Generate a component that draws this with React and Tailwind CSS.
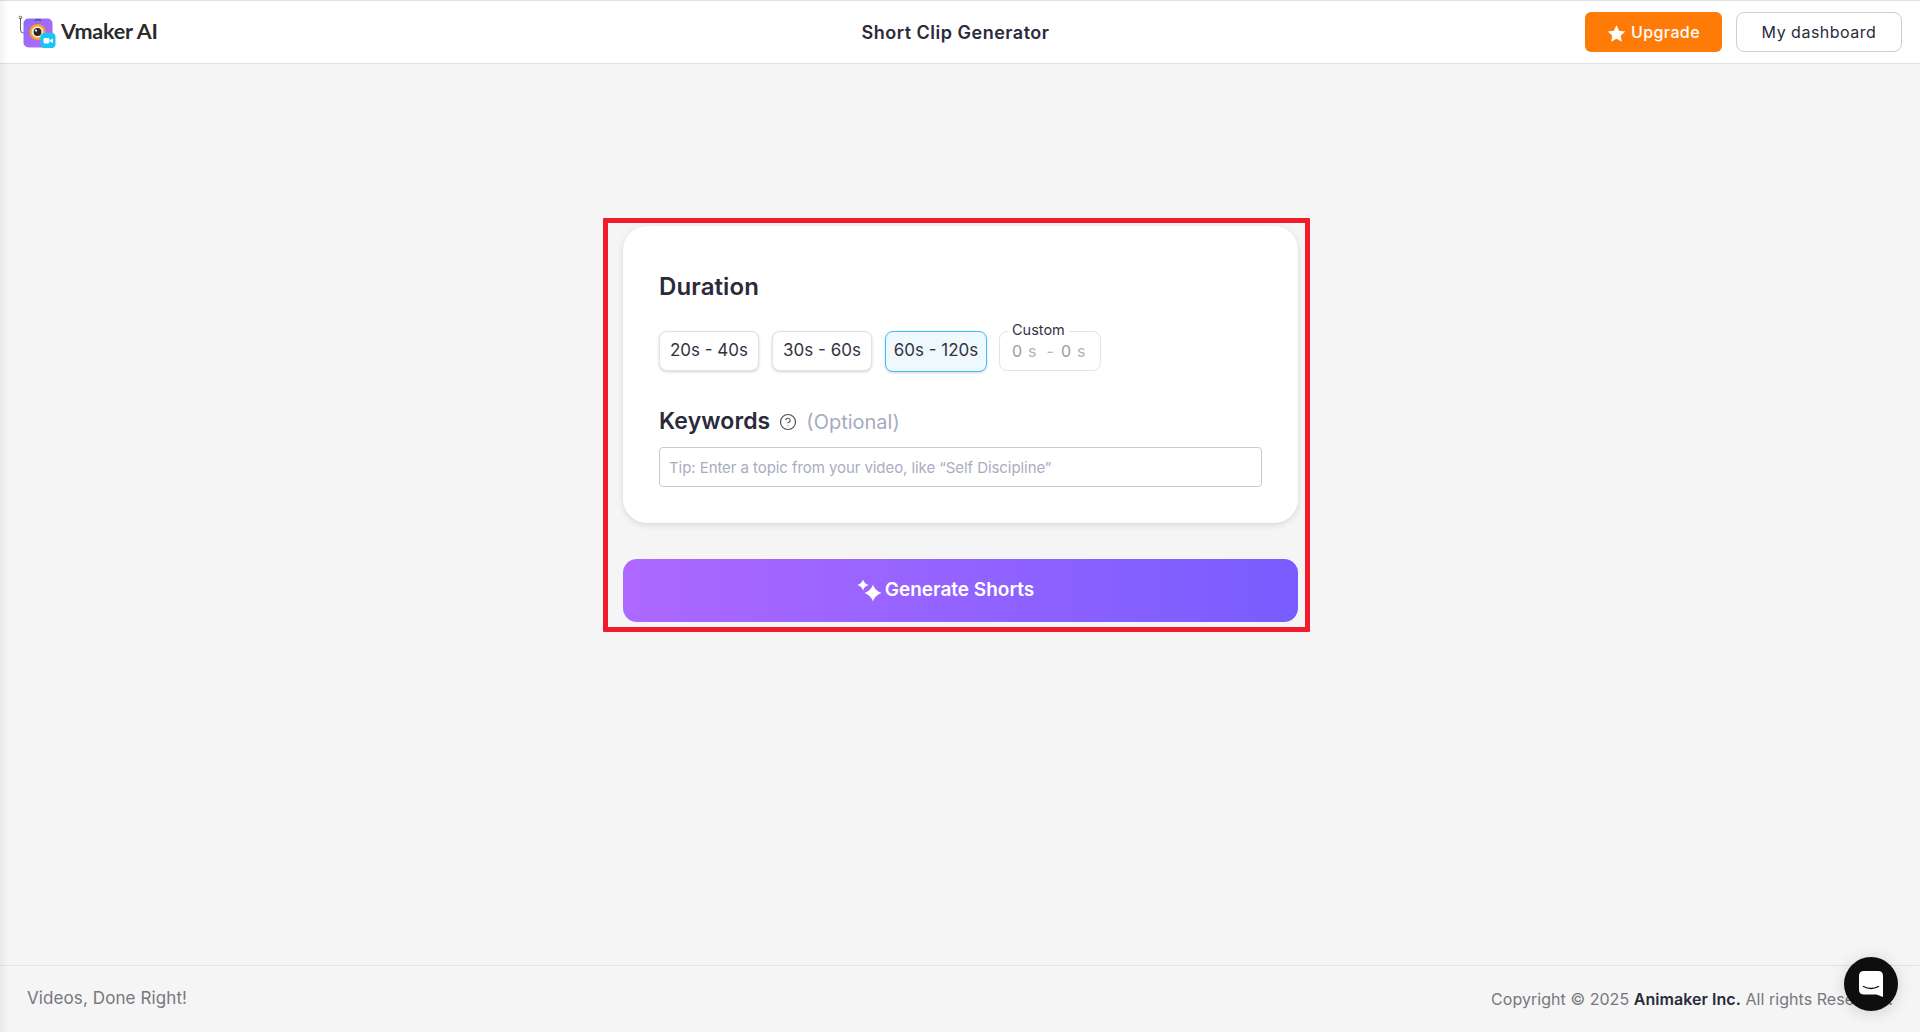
import React from "react";
import { CircleHelp } from "lucide-react";

const font = "font-['Inter','Noto_Sans',sans-serif]";

function Logo() {
  return (
    <svg width="40" height="38" viewBox="0 0 40 38" className="shrink-0 mt-[3px]">
      <path d="M3.5 3 V15 Q3.5 18 6.5 18 H7" fill="none" stroke="#555" strokeWidth="0.9" />
      <circle cx="3.5" cy="2.5" r="1.3" fill="none" stroke="#444" strokeWidth="0.8" />
      <rect x="31" y="16" width="5" height="8" rx="1.5" fill="#ff9f1c" />
      <defs>
        <linearGradient id="lg" x1="0" y1="0" x2="1" y2="1">
          <stop offset="0" stopColor="#8a6cf5" />
          <stop offset="1" stopColor="#b66cf8" />
        </linearGradient>
      </defs>
      <rect x="6.5" y="3.5" width="29" height="29" rx="5" fill="url(#lg)" />
      <path d="M18 5.5 Q21 3.6 24 5.5" fill="none" stroke="#3b2a78" strokeWidth="1" />
      <circle cx="20.5" cy="17" r="8" fill="#ffa11e" />
      <circle cx="20.5" cy="17" r="5.8" fill="#f5eee6" />
      <circle cx="20.5" cy="17" r="3.9" fill="#2d2420" />
      <circle cx="19" cy="15.6" r="1.1" fill="#fff" />
      <rect x="23.5" y="18" width="15" height="15" rx="4" fill="#18c5fb" />
      <rect x="26.5" y="23" width="6" height="5.5" rx="1.4" fill="#fff" />
      <path d="M33 25.2 L36 23.5 V28.1 L33 26.5 Z" fill="#fff" />
    </svg>
  );
}

function Sparkles() {
  return (
    <svg width="25" height="23" viewBox="0 0 25 23" fill="#fff" className="shrink-0">
      <path d="M6 0.5 C7 3.4 8.4 4.8 11.5 6 C8.4 7.2 7 8.6 6 11.5 C5 8.6 3.6 7.2 0.5 6 C3.6 4.8 5 3.4 6 0.5 Z" />
      <path d="M16 5.5 C17.4 9.6 19.8 12.2 24.5 14 C19.8 15.8 17.4 18.4 16 22.5 C14.6 18.4 12.2 15.8 7.5 14 C12.2 12.2 14.6 9.6 16 5.5 Z" />
    </svg>
  );
}

function Pill({ children, active }) {
  return (
    <button
      className={
        "h-[40px] rounded-[8px] border pb-[1px] text-[17px] text-[#33333f] shadow-[0_1px_3px_rgba(0,0,0,0.18)] flex items-center justify-center whitespace-nowrap " +
        (active
          ? "w-[102px] h-[41px] border-[#38c0fb] bg-[#eff9fd]"
          : "w-[100px] border-[#e3e3e3] bg-white")
      }
    >
      {children}
    </button>
  );
}

export default function App() {
  return (
    <div className={"relative h-screen w-full overflow-hidden flex flex-col bg-[#f5f5f5] text-[#2a2a3a] " + font}>
      <header className="h-[64px] shrink-0 bg-white border-t border-t-[#e0e0e0] border-b border-b-[#e0e0e0] grid grid-cols-[1fr_auto_1fr] items-center pl-[17px] pr-[18px]">
        <div className="flex items-center gap-[4px]">
          <Logo />
          <span className="font-['Lato',sans-serif] font-bold text-[21.5px] leading-none tracking-[-0.2px] text-[#2b2b2b]">Vmaker AI</span>
        </div>
        <div className="pr-[8px] text-[18px] font-semibold tracking-[0.5px] text-[#2a2a3a]">Short Clip Generator</div>
        <div className="flex justify-end items-center gap-[14px]">
          <button className="h-[40px] w-[137px] rounded-[6px] bg-[#ff7b08] text-white text-[16px] font-medium flex items-center justify-center gap-[5px] tracking-[0.4px]">
            <svg width="19" height="19" viewBox="0 0 24 24" fill="#fff" className="mt-[2px]"><path d="M12 1.5 L15.3 8.6 L23 9.5 L17.3 14.8 L18.8 22.5 L12 18.7 L5.2 22.5 L6.7 14.8 L1 9.5 L8.7 8.6 Z" /></svg>
            Upgrade
          </button>
          <button className="h-[40px] w-[166px] rounded-[8px] bg-white border border-[#cfcfcf] text-[16px] text-[#2a2a3a] tracking-[0.5px]">My dashboard</button>
        </div>
      </header>

      <main className="flex-1 flex justify-center pt-[162px]">
        <div className="relative w-[675px] h-fit ml-[1px]">
          <div className="h-[297px] rounded-[24px] bg-white shadow-[0_2px_6px_rgba(0,0,0,0.12)] px-[36px] pt-[44px]">
            <h2 className="text-[24px] leading-[34px] font-semibold tracking-[0.1px]">Duration</h2>
            <div className="mt-[27px] flex items-start gap-[13px]">
              <Pill>20s - 40s</Pill>
              <Pill>30s - 60s</Pill>
              <Pill active>60s - 120s</Pill>
              <div className="relative h-[40px] w-[102px] -ml-[1px] rounded-[8px] border border-[#e3e3e3] bg-white flex items-center pl-[12px] text-[16px] text-[#9b9ba0]">
                <span className="absolute -top-[11px] left-[8px] bg-white px-[4px] text-[14.5px] leading-[18px] text-[#33333f]">Custom</span>
                <span>0</span><span className="ml-[6px] text-[#b0b3c6]">s</span>
                <span className="ml-[10px] text-[#b0b3c6]">-</span>
                <span className="ml-[7px]">0</span><span className="ml-[6px] text-[#b0b3c6]">s</span>
              </div>
            </div>
            <div className="mt-[31px] flex items-center h-[37px]">
              <span className="text-[23px] font-semibold tracking-[0.1px]">Keywords</span>
              <CircleHelp size={18} strokeWidth={1.5} className="ml-[9px] text-[#4a4a55]" />
              <span className="ml-[9px] text-[20px] text-[#a6abc0]">(Optional)</span>
            </div>
            <input
              readOnly
              placeholder="Tip: Enter a topic from your video, like “Self Discipline”"
              className="mt-[7px] block w-full h-[40px] rounded-[4px] border border-[#cbcbcf] bg-white px-[9px] text-[15px] tracking-[-0.07px] outline-none placeholder:text-[#a9adc0]"
            />
          </div>
          <button className="mt-[36px] h-[63px] w-full rounded-[14px] bg-gradient-to-r from-[#ad68ff] to-[#785cff] text-white text-[19px] font-semibold flex items-center justify-center gap-[3px] pr-[30px] pb-[1px]">
            <Sparkles />
            Generate Shorts
          </button>
          <div className="pointer-events-none absolute -left-[20px] -right-[12px] -top-[8px] -bottom-[10px] border-[5px] border-[#f01c2c] rounded-[1px]" />
        </div>
      </main>

      <footer className="h-[67px] shrink-0 border-t border-t-[#e2e2e2] flex items-center justify-between pl-[27px] pr-[27px] pb-[1px] text-[16px] text-[#77777d]">
        <span className="text-[17px] tracking-[0.1px]">Videos, Done Right!</span>
        <span className="tracking-[0.05px]">Copyright © 2025 <span className="font-semibold text-[#2a2a3a]">Animaker Inc.</span> All rights Reserved.</span>
      </footer>

      <div className="absolute left-[1844px] top-[957px] h-[54px] w-[54px] rounded-full bg-[#0e0e0e] shadow-[0_2px_16px_rgba(0,0,0,0.15)] flex items-center justify-center">
        <svg width="26" height="28" viewBox="0 0 26 28">
          <path d="M6 1 H20 Q25 1 25 6 V27 L18.5 24.5 H6 Q1 24.5 1 19.5 V6 Q1 1 6 1 Z" fill="#fff" />
          <path d="M5.5 16.5 Q13 20.5 20.5 16.5" fill="none" stroke="#0e0e0e" strokeWidth="1.4" strokeLinecap="round" />
        </svg>
      </div>

      <div className="pointer-events-none absolute inset-y-0 left-0 w-[8px] bg-gradient-to-r from-black/5 to-transparent" />
    </div>
  );
}
